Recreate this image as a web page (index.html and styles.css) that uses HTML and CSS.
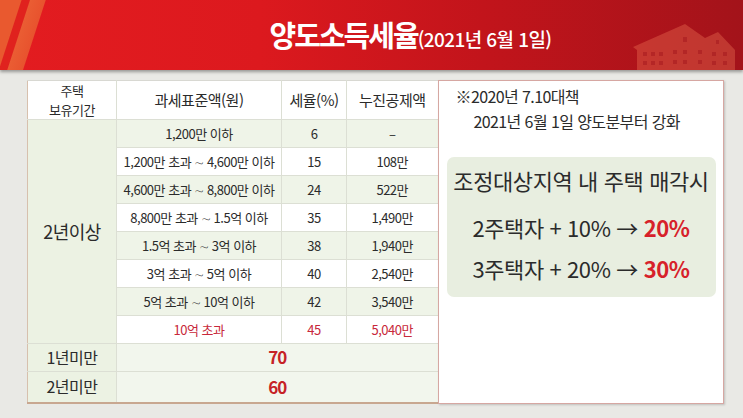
FILE: index.html
```html
<!DOCTYPE html>
<html lang="ko">
<head>
<meta charset="utf-8">
<title>양도소득세율</title>
<link rel="stylesheet" href="styles.css">
</head>
<body>
<header class="banner">
  <h1 class="title">양도소득세율<span class="sub">(2021년 6월 1일)</span></h1>
  <svg class="house" viewBox="0 0 112 50" width="112" height="50" aria-hidden="true">
    <polygon class="house-body" points="5,27 57,4 77,18 90,12 107,30 107,50 9,50 9,30"/>
    <g class="house-win">
      <rect x="15" y="32" width="4" height="4"/><rect x="23" y="32" width="4" height="4"/><rect x="31" y="32" width="4" height="4"/>
      <rect x="45" y="30" width="4" height="4"/><rect x="55" y="30" width="4" height="4"/><rect x="70" y="30" width="4" height="4"/>
      <rect x="84" y="32" width="4" height="4"/><rect x="95" y="32" width="4" height="4"/>
      <rect x="15" y="41" width="4" height="4"/><rect x="23" y="41" width="4" height="4"/><rect x="31" y="41" width="4" height="4"/>
      <rect x="45" y="40" width="4" height="4"/><rect x="55" y="40" width="4" height="4"/><rect x="70" y="40" width="4" height="4"/>
      <rect x="84" y="41" width="4" height="4"/><rect x="95" y="41" width="4" height="4"/>
      <rect x="55" y="17" width="4" height="5"/><rect x="88" y="20" width="3" height="4"/>
    </g>
  </svg>
</header>
<main class="content">
  <table class="tax">
    <colgroup>
      <col class="c1"><col class="c2"><col class="c3"><col class="c4">
    </colgroup>
    <thead>
      <tr class="head">
        <th class="period-h"><span class="hl">주택</span><span class="hl">보유기간</span></th>
        <th>과세표준액(원)</th>
        <th>세율(%)</th>
        <th>누진공제액</th>
      </tr>
    </thead>
    <tbody>
      <tr class="g">
        <td class="period big" rowspan="8">2년이상</td>
        <td>1,200만 이하</td><td>6</td><td>–</td>
      </tr>
      <tr class="w"><td>1,200만 초과 ∼ 4,600만 이하</td><td>15</td><td>108만</td></tr>
      <tr class="g"><td>4,600만 초과 ∼ 8,800만 이하</td><td>24</td><td>522만</td></tr>
      <tr class="w"><td>8,800만 초과 ∼ 1.5억 이하</td><td>35</td><td>1,490만</td></tr>
      <tr class="g"><td>1.5억 초과 ∼ 3억 이하</td><td>38</td><td>1,940만</td></tr>
      <tr class="w"><td>3억 초과 ∼ 5억 이하</td><td>40</td><td>2,540만</td></tr>
      <tr class="g"><td>5억 초과 ∼ 10억 이하</td><td>42</td><td>3,540만</td></tr>
      <tr class="w red"><td>10억 초과</td><td>45</td><td>5,040만</td></tr>
      <tr class="short r1"><td class="period">1년미만</td><td class="rate" colspan="3">70</td></tr>
      <tr class="short r2"><td class="period">2년미만</td><td class="rate" colspan="3">60</td></tr>
    </tbody>
  </table>
  <aside class="note">
    <p class="note-title">※2020년 7.10대책</p>
    <p class="note-line">2021년 6월 1일 양도분부터 강화</p>
    <div class="callout">
      <p class="callout-head">조정대상지역 내 주택 매각시</p>
      <p class="callout-line l2">2주택자 + 10% → <b class="hi">20%</b></p>
      <p class="callout-line l3">3주택자 + 20% → <b class="hi">30%</b></p>
    </div>
  </aside>
</main>
</body>
</html>
```

FILE: styles.css
```css
html, body {
  margin: 0;
  padding: 0;
}
body {
  width: 743px;
  height: 418px;
  overflow: hidden;
  background: #e9e9e5;
  font-family: "Noto Sans CJK KR", "Noto Sans", sans-serif;
  color: #2b2b2b;
}
.banner {
  position: relative;
  height: 70px;
  display: flex;
  align-items: center;
  justify-content: center;
  background:
    linear-gradient(108deg,
      #e9592f 0, #e9592f 20px,
      #e0221e 21px, #e0221e 28px,
      #ea5d33 29px, #e8532e 43px,
      rgba(224,30,30,0) 44px),
    linear-gradient(90deg, #e31c20 0%, #dc191e 35%, #c2141b 65%, #a3131a 100%);
  box-shadow: 0 2px 3px rgba(0,0,0,0.35);
}
.title {
  margin: 0 0 0 78px;
  color: #ffffff;
  font-size: 29px;
  font-weight: 700;
  letter-spacing: -2px;
  line-height: 1;
  padding-bottom: 2px;
}
.sub {
  font-size: 19px;
  font-weight: 500;
  letter-spacing: -0.6px;
}
.house {
  position: absolute;
  left: 628px;
  top: 20px;
}
.house-body {
  fill: rgba(255,140,100,0.3);
}
.house-win rect {
  fill: rgba(150,10,20,0.35);
}
.content {
  display: flex;
  align-items: flex-start;
  padding: 10px 0 0 27px;
}
.tax {
  width: 410px;
  table-layout: fixed;
  border-collapse: collapse;
  border-left: 1px solid #d7c0ad;
  border-bottom: 2px solid #c8a790;
  border-top: 1px solid #d8d8d2;
}
.c1 { width: 89px; }
.c2 { width: 165px; }
.c3 { width: 65px; }
.c4 { width: 91px; }
.tax th, .tax td {
  padding: 0;
  text-align: center;
  vertical-align: middle;
  border: 1px solid #dcdfd4;
  font-size: 13px;
  font-weight: 400;
  letter-spacing: -0.5px;
  line-height: 1.2;
}
.tax tr:first-child th, .tax tr:first-child td { border-top: none; }
.tax th:first-child, .tax td:first-child { border-left: none; }
.tax th:last-child, .tax td:last-child { border-right: none; }
.head {
  height: 39px;
  background: #ffffff;
}
.head th {
  font-size: 15px;
}
.head .period-h {
  font-size: 13px;
}
.hl {
  display: block;
  line-height: 19px;
}
.tax tbody tr { height: 28px; }
.g { background: #eff4e8; }
.w { background: #ffffff; }
.tax .period {
  background: #ecf2e3;
  font-size: 16px;
}
.tax .period.big {
  font-size: 18px;
}
.red td { color: #c8283a; }
.tax .r1 { height: 28px; }
.tax .r2 { height: 31px; }
.short { background: #f2f6ed; }
.tax .rate {
  color: #c62226;
  font-weight: 700;
  font-size: 17px;
  letter-spacing: -1px;
}
.note {
  width: 284px;
  height: 322px;
  background: #ffffff;
  border: 1px solid #d6a7a2;
  box-shadow: 1px 1px 2px rgba(0,0,0,0.18);
  padding: 0;
  box-sizing: content-box;
}
.note p { margin: 0; }
.note-title {
  font-size: 16px;
  line-height: 25px;
  padding: 3px 0 0 17px;
  letter-spacing: -0.6px;
}
.note-line {
  font-size: 16px;
  line-height: 25px;
  padding-left: 35px;
  letter-spacing: -0.6px;
}
.callout {
  margin: 23px 7px 0 8px;
  height: 140px;
  background: #e8eee0;
  border-radius: 7px;
  display: flex;
  flex-direction: column;
  align-items: center;
  padding-top: 6px;
  box-sizing: border-box;
}
.note .callout-head {
  font-size: 22px;
  line-height: 34px;
  letter-spacing: -0.4px;
}
.note .callout-line {
  font-size: 22px;
  line-height: 34px;
  letter-spacing: -0.4px;
}
.note .l2 { margin-top: 13px; }
.note .l3 { margin-top: 7px; }
.hi {
  color: #d7212a;
  font-weight: 700;
}
```
